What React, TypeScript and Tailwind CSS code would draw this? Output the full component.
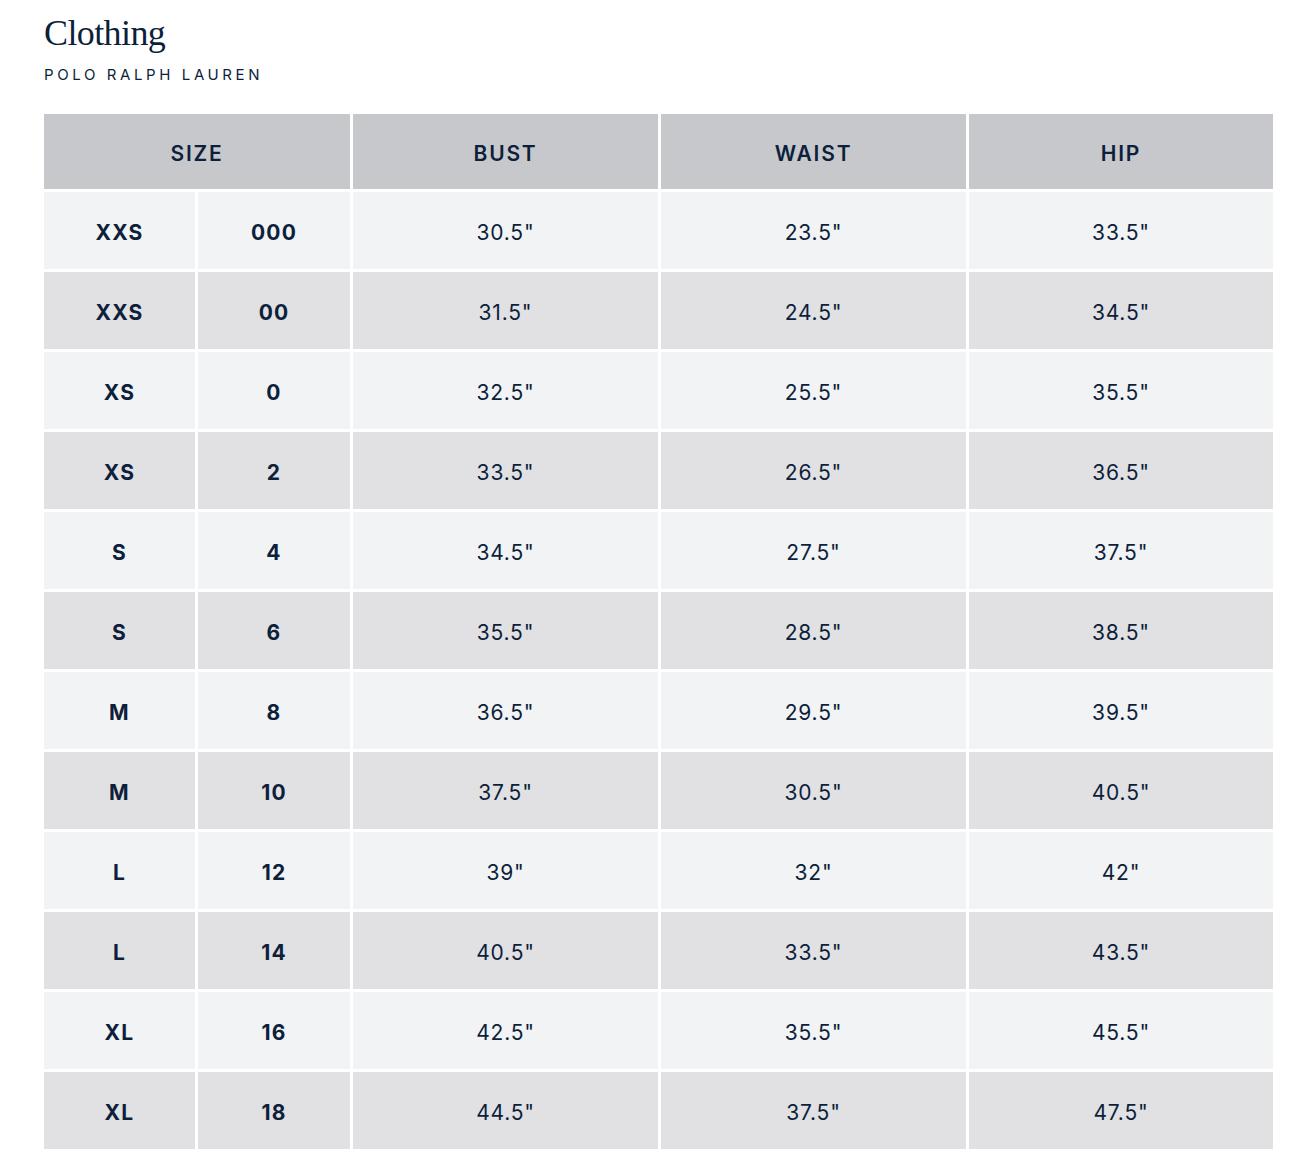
const ROWS: [string, string, string, string, string][] = [
  ["XXS", "000", '30.5"', '23.5"', '33.5"'],
  ["XXS", "00", '31.5"', '24.5"', '34.5"'],
  ["XS", "0", '32.5"', '25.5"', '35.5"'],
  ["XS", "2", '33.5"', '26.5"', '36.5"'],
  ["S", "4", '34.5"', '27.5"', '37.5"'],
  ["S", "6", '35.5"', '28.5"', '38.5"'],
  ["M", "8", '36.5"', '29.5"', '39.5"'],
  ["M", "10", '37.5"', '30.5"', '40.5"'],
  ["L", "12", '39"', '32"', '42"'],
  ["L", "14", '40.5"', '33.5"', '43.5"'],
  ["XL", "16", '42.5"', '35.5"', '45.5"'],
  ["XL", "18", '44.5"', '37.5"', '47.5"'],
];

const HEADERS = ["BUST", "WAIST", "HIP"];

export default function App() {
  return (
    <div className="min-h-screen bg-white px-[44px] pt-[14px] text-[#0d1f3a] font-['Inter',sans-serif]">
      <h1 className="font-['Liberation_Serif','DejaVu_Serif',serif] text-[36px] leading-[39px] tracking-[-0.6px]">
        Clothing
      </h1>
      <p className="mt-[13px] text-[15px] leading-[17px] tracking-[3.6px]">POLO RALPH LAUREN</p>

      <div className="mt-[31px] w-[1229px] grid grid-cols-[151px_152px_305px_305px_304px] gap-[3px] text-[21px]">
        <div className="col-span-2 h-[75px] pt-[4px] flex items-center justify-center bg-[#c7c8cb] font-semibold tracking-[1.8px]">
          SIZE
        </div>
        {HEADERS.map((h) => (
          <div
            key={h}
            className="h-[75px] pt-[4px] flex items-center justify-center bg-[#c7c8cb] font-semibold tracking-[1.8px]"
          >
            {h}
          </div>
        ))}
        {ROWS.map((row, i) =>
          row.map((cell, j) => (
            <div
              key={`${i}-${j}`}
              className={`h-[77px] pt-[4px] flex items-center justify-center ${
                i % 2 === 0 ? "bg-[#f2f3f4]" : "bg-[#e1e1e4]"
              } ${j < 2 ? "font-bold tracking-[1.2px]" : "font-normal tracking-[0.8px]"}`}
            >
              {cell}
            </div>
          ))
        )}
      </div>
    </div>
  );
}
